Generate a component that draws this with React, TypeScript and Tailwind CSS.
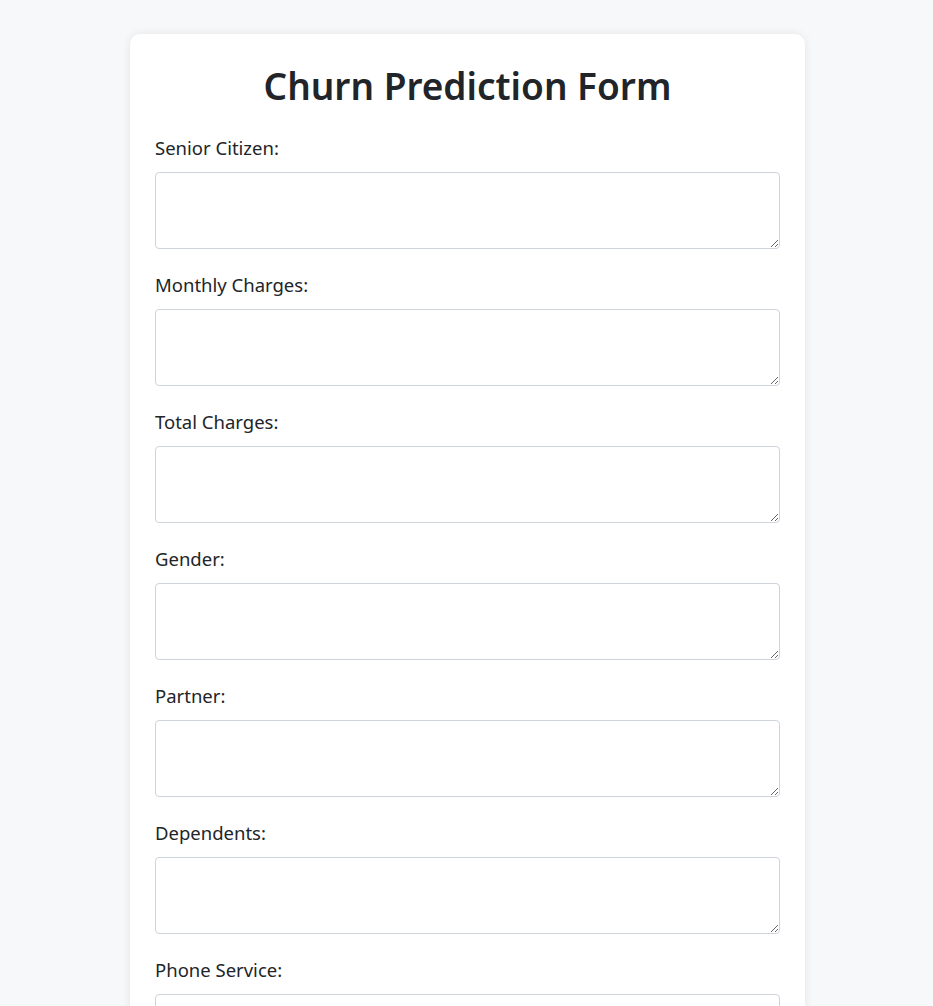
const fields = [
  "Senior Citizen:",
  "Monthly Charges:",
  "Total Charges:",
  "Gender:",
  "Partner:",
  "Dependents:",
  "Phone Service:",
  "Multiple Lines:",
  "Internet Service:",
];

export default function App() {
  return (
    <div className="min-h-screen bg-[#f7f8fa] pt-[34px] pl-[2px] font-['Noto_Sans',sans-serif] text-[#212529]">
      <div className="mx-auto w-[675px] rounded-[10px] bg-white px-[25px] pt-[28px] pb-8 shadow-[0_0_10px_rgba(0,0,0,0.08)]">
        <h1 className="mb-[26px] text-center text-[37px] leading-[48px] font-semibold">Churn Prediction Form</h1>
        <form>
          {fields.map((label) => (
            <div key={label} className="mb-[24px]">
              <label className="mb-[12px] block text-[18.5px] leading-[24px]">{label}</label>
              <textarea className="block h-[77px] w-full rounded-[4px] border border-[#ced4da] bg-white p-2" />
            </div>
          ))}
        </form>
      </div>
    </div>
  );
}
